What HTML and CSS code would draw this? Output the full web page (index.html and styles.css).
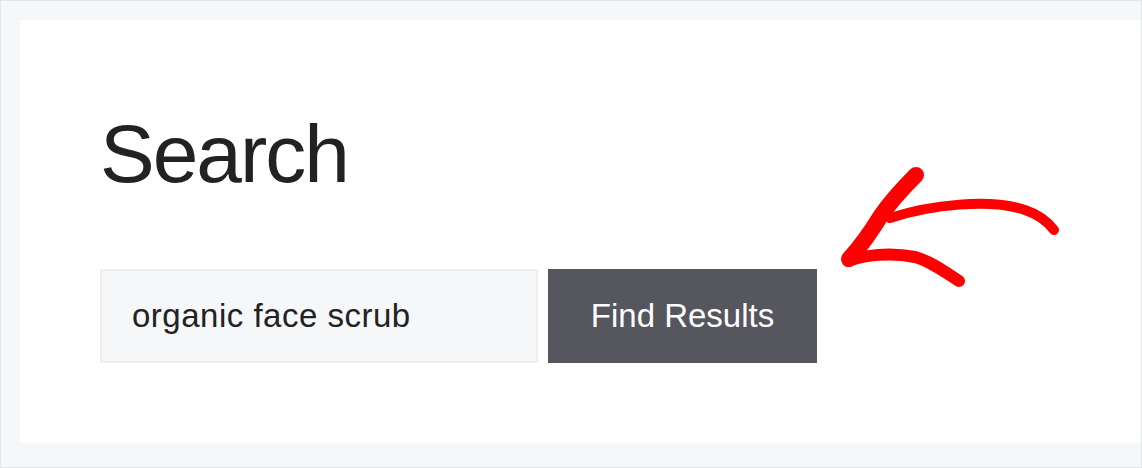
FILE: index.html
```html
<!DOCTYPE html>
<html lang="en">
<head>
<meta charset="utf-8">
<title>Search</title>
<link rel="stylesheet" href="styles.css">
</head>
<body>
<div class="frame">
  <main class="panel">
    <h1 class="title">Search</h1>
    <form class="search-row" onsubmit="return false;">
      <input class="search-input" type="text" value="organic face scrub" aria-label="Search">
      <button class="search-button" type="submit">Find Results</button>
    </form>
    <svg class="arrow" width="260" height="150" viewBox="0 0 260 150" aria-hidden="true">
      <g fill="none" stroke="#ff0000" stroke-linecap="round" stroke-linejoin="round">
        <path d="M96,25 C80,41 68,55 60,67 C52,80 42,95 29,109" stroke-width="16"/>
        <path d="M70,68 C110,55 170,48 205,60 C220,65 228,72 234,80" stroke-width="10"/>
        <path d="M28,111 C45,105 70,102 95,107 C110,111 125,122 139,131" stroke-width="12"/>
      </g>
    </svg>
  </main>
</div>
</body>
</html>
```

FILE: styles.css
```css
html, body {
  margin: 0;
  padding: 0;
}

body {
  width: 1142px;
  height: 468px;
  overflow: hidden;
  font-family: "Liberation Sans", Arial, sans-serif;
  color: #222222;
}

.frame {
  box-sizing: border-box;
  width: 1142px;
  height: 468px;
  border: 1px solid #e3e5e8;
  background: #f6f7f9;
  padding: 19px 0 24px 19px;
}

.panel {
  position: relative;
  box-sizing: border-box;
  height: 423px;
  background: #ffffff;
  padding: 93px 0 0 80px;
}

.title {
  margin: 0 0 74px;
  font-size: 82px;
  line-height: 1;
  font-weight: 400;
  letter-spacing: -2px;
  color: #222222;
}

.search-row {
  display: flex;
  gap: 10px;
  margin: 0;
}

.search-input {
  box-sizing: border-box;
  width: 438px;
  height: 94px;
  margin: 0;
  border: 2px solid #eeeff1;
  border-radius: 0;
  background: #f6f7f9;
  padding: 0 10px 0 30px;
  font-family: "Liberation Sans", Arial, sans-serif;
  font-size: 33px;
  letter-spacing: 0.5px;
  color: #222222;
  outline: none;
}

.search-button {
  box-sizing: border-box;
  width: 269px;
  height: 94px;
  margin: 0;
  border: none;
  border-radius: 0;
  background: #56565f;
  color: #ffffff;
  font-family: "Liberation Sans", Arial, sans-serif;
  font-size: 33px;
  padding: 0;
}

.arrow {
  position: absolute;
  left: 800px;
  top: 130px;
}
```
